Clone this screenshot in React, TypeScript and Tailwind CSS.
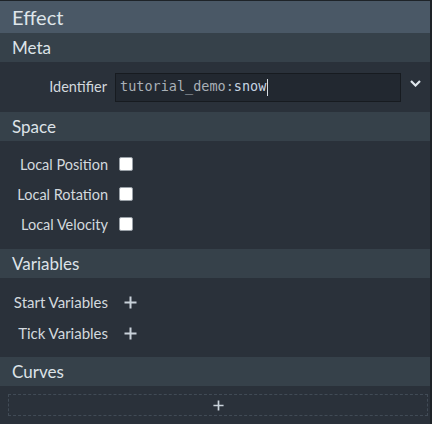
import { useState } from "react";

function SectionHeader({ title }: { title: string }) {
  return (
    <div className="flex h-[29px] items-center bg-[#36414a] pl-[12px] text-[17px] leading-none text-[#dde3e8]">
      {title}
    </div>
  );
}

function CheckRow({ label, checked, onToggle }: { label: string; checked: boolean; onToggle: () => void }) {
  return (
    <div className="flex h-[30px] items-center">
      <span className="w-[108px] text-right text-[14.5px] text-[#d3d9de]">{label}</span>
      <button
        type="button"
        onClick={onToggle}
        className="ml-[11px] mb-[3px] flex h-[14px] w-[14px] items-center justify-center rounded-[2px] border border-[#9aa1a8] bg-white"
      >
        {checked && <span className="h-[6px] w-[6px] bg-[#2a313a]" />}
      </button>
    </div>
  );
}

function PlusIcon({ size = 13 }: { size?: number }) {
  return (
    <svg width={size} height={size} viewBox="0 0 13 13" fill="none">
      <path d="M6.5 0.5v12M0.5 6.5h12" stroke="#c9d2da" strokeWidth="2" />
    </svg>
  );
}

function VariableRow({ label }: { label: string }) {
  return (
    <div className="flex h-[31px] items-center">
      <span className="w-[108px] text-right text-[15px] text-[#d3d9de]">{label}</span>
      <button type="button" className="ml-[16px] flex items-center">
        <PlusIcon />
      </button>
    </div>
  );
}

export default function App() {
  const [flags, setFlags] = useState({ position: false, rotation: false, velocity: false });

  return (
    <div className="h-[424px] w-[432px] overflow-hidden bg-[#1e2328] font-['Lato',sans-serif]">
      <div className="mt-[1px] h-[423px] w-[430px] bg-[#2a313a]">
        {/* Effect title */}
        <div className="flex h-[32px] items-center bg-[#4a5866] pl-[12px] text-[20px] leading-none text-[#dfe5ea]">
          Effect
        </div>

        {/* Meta */}
        <SectionHeader title="Meta" />
        <div className="flex h-[50px] items-center">
          <span className="w-[107px] text-right text-[14.5px] text-[#d3d9de]">Identifier</span>
          <div className="ml-[8px] flex h-[29px] w-[286px] items-center border border-[#171b20] bg-[#222830] pl-[4px] font-['DejaVu_Sans_Mono',monospace] text-[13.5px] leading-none text-[#a9b0b7]">
            <span>tutorial_demo:</span>
            <span className="text-[#c6d4e2]">snow</span>
            <span className="ml-[1px] h-[17px] w-[1px] bg-[#d6dce2]" />
          </div>
          <svg width="11" height="7" viewBox="0 0 11 7" className="ml-[9px] mb-[8px]" fill="none">
            <path d="M1 1l4.5 4.5L10 1" stroke="#dfe6ec" strokeWidth="2.2" />
          </svg>
        </div>

        {/* Space */}
        <SectionHeader title="Space" />
        <div className="flex h-[108px] flex-col pt-[9px]">
          <CheckRow
            label="Local Position"
            checked={flags.position}
            onToggle={() => setFlags({ ...flags, position: !flags.position })}
          />
          <CheckRow
            label="Local Rotation"
            checked={flags.rotation}
            onToggle={() => setFlags({ ...flags, rotation: !flags.rotation })}
          />
          <CheckRow
            label="Local Velocity"
            checked={flags.velocity}
            onToggle={() => setFlags({ ...flags, velocity: !flags.velocity })}
          />
        </div>

        {/* Variables */}
        <SectionHeader title="Variables" />
        <div className="flex h-[79px] flex-col pt-[9px]">
          <VariableRow label="Start Variables" />
          <VariableRow label="Tick Variables" />
        </div>

        {/* Curves */}
        <SectionHeader title="Curves" />
        <div className="pt-[8px]">
          <button
            type="button"
            className="ml-[8px] flex h-[22px] w-[420px] items-center justify-center border border-dashed border-[#414b56]"
          >
            <PlusIcon size={11} />
          </button>
        </div>
      </div>
    </div>
  );
}
